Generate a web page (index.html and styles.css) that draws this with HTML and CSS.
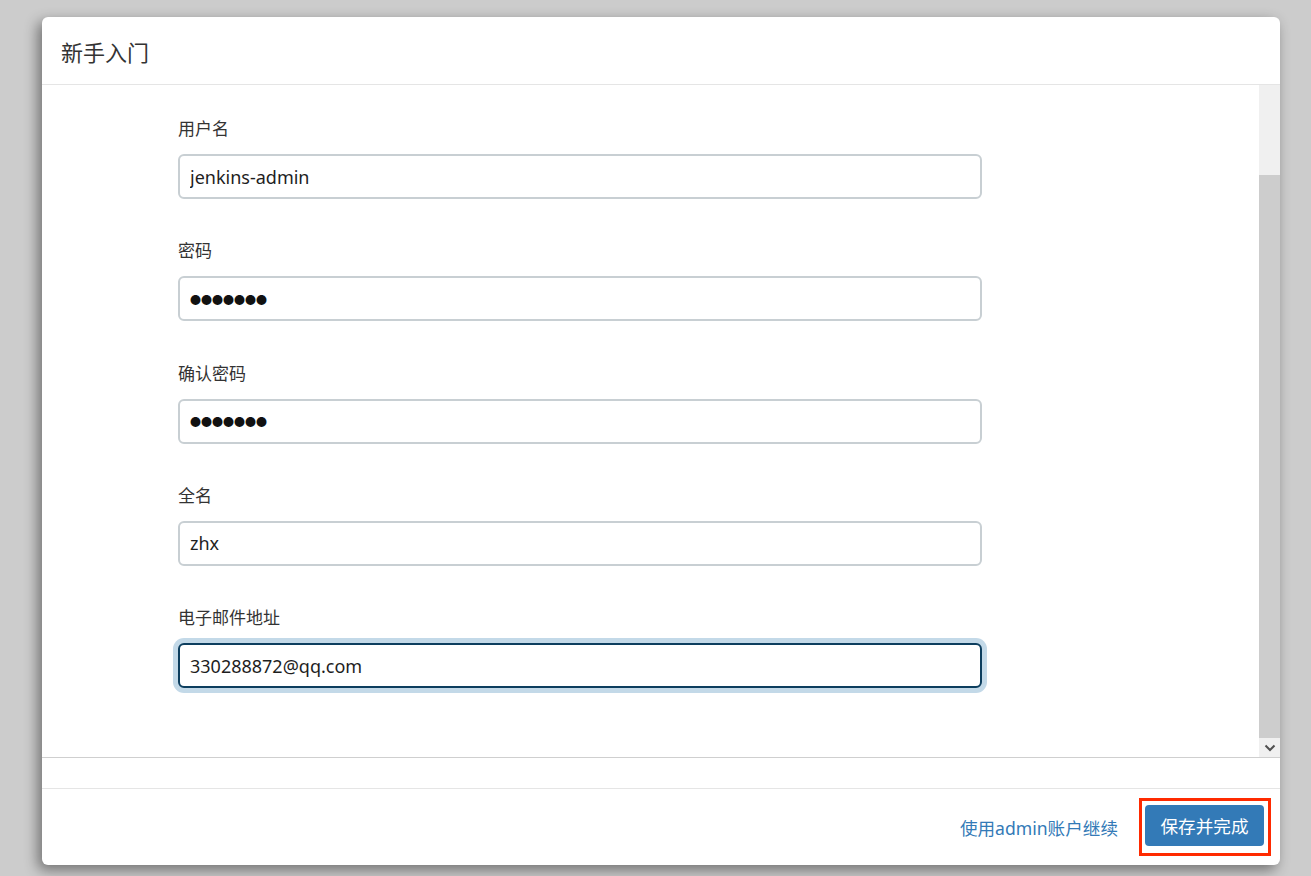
FILE: index.html
```html
<!DOCTYPE html>
<html lang="zh-CN">
<head>
    <meta charset="UTF-8">
    <title>新手入门</title>
    <link rel="stylesheet" href="styles.css">
</head>
<body>

    <div class="modal">
        <div class="modal-header">
            <h4>新手入门</h4>
        </div>

        <div class="modal-body">
            <div class="body-content">
                <!-- Create first admin user -->
                <form class="user-form">
                    <div class="form-group">
                        <label>用户名</label>
                        <input type="text" value="jenkins-admin">
                    </div>
                    <div class="form-group">
                        <label>密码</label>
                        <input type="text" class="dots" value="●●●●●●●">
                    </div>
                    <div class="form-group">
                        <label>确认密码</label>
                        <input type="text" class="dots" value="●●●●●●●">
                    </div>
                    <div class="form-group">
                        <label>全名</label>
                        <input type="text" value="zhx">
                    </div>
                    <div class="form-group">
                        <label>电子邮件地址</label>
                        <input type="text" class="focused" value="330288872@qq.com">
                    </div>
                </form>
            </div>

            <div class="scrollbar">
                <div class="track"></div>
                <div class="thumb"></div>
                <div class="arrow">
                    <svg width="12" height="8" viewBox="0 0 12 8">
                        <path d="M1.5 1.5 L6 6 L10.5 1.5" fill="none" stroke="#505050" stroke-width="2"/>
                    </svg>
                </div>
            </div>
        </div>

        <div class="modal-gap"></div>

        <div class="modal-footer">
            <a href="#" class="skip-link">使用admin账户继续</a>
            <div class="highlight">
                <button class="btn-primary">保存并完成</button>
            </div>
        </div>
    </div>

</body>
</html>
```

FILE: styles.css
```css
body {
    margin: 0;
    padding: 17px 31px 11px 42px;
    background-color: #cccccc;
    font-family: "Noto Sans", "Noto Sans CJK SC", sans-serif;
    color: #333;
}

.modal {
    height: 848px;
    background-color: #fff;
    border-radius: 6px;
    box-shadow: -4px 5px 14px rgba(0, 0, 0, 0.45);
    display: flex;
    flex-direction: column;
    overflow: hidden;
}

.modal-header {
    height: 67px;
    border-bottom: 1px solid #e5e5e5;
    padding-left: 19px;
    display: flex;
    align-items: center;
}

.modal-header h4 {
    margin: 0;
    font-size: 22px;
    font-weight: normal;
    color: #333;
}

.modal-body {
    height: 672px;
    display: flex;
    border-bottom: 1px solid #cfcfcf;
}

.body-content {
    flex: 1;
    padding: 33px 0 0 136px;
}

.user-form {
    width: 804px;
}

.form-group {
    display: flex;
    flex-direction: column;
    margin-bottom: 41.25px;
}

.form-group label {
    font-size: 17px;
    line-height: 22px;
    margin-bottom: 14px;
}

.form-group input {
    height: 45px;
    box-sizing: border-box;
    border: 2px solid #c8cfd3;
    border-radius: 6px;
    padding: 0 10px;
    font-family: "Noto Sans", "Noto Sans CJK SC", sans-serif;
    font-size: 18px;
    color: #1e1e1e;
    outline: none;
}

.form-group input.dots {
    font-size: 11px;
    letter-spacing: 0;
    color: #111;
}

.form-group input.focused {
    border-color: #0d3e5e;
    box-shadow: 0 0 0 5px #c3d9e8;
}

.scrollbar {
    width: 21px;
    display: flex;
    flex-direction: column;
}

.scrollbar .track {
    height: 90px;
    background-color: #f0f0f0;
}

.scrollbar .thumb {
    flex: 1;
    background-color: #cdcdcd;
}

.scrollbar .arrow {
    height: 19px;
    background-color: #f0f0f0;
    display: flex;
    align-items: center;
    justify-content: center;
}

.modal-gap {
    height: 30px;
    border-bottom: 1px solid #e5e5e5;
}

.modal-footer {
    flex: 1;
    display: flex;
    justify-content: flex-end;
    align-items: center;
    gap: 21px;
    padding-right: 9px;
}

.skip-link {
    color: #337ab7;
    font-size: 17.6px;
    text-decoration: none;
}

.highlight {
    border: 3px solid #ff2a00;
    padding: 4px 4px 7px 3px;
}

.btn-primary {
    display: block;
    width: 119px;
    height: 41px;
    background-color: #337ab7;
    color: #fff;
    border: none;
    border-radius: 4px;
    font-family: "Noto Sans", "Noto Sans CJK SC", sans-serif;
    font-size: 17.6px;
    cursor: pointer;
}
```
